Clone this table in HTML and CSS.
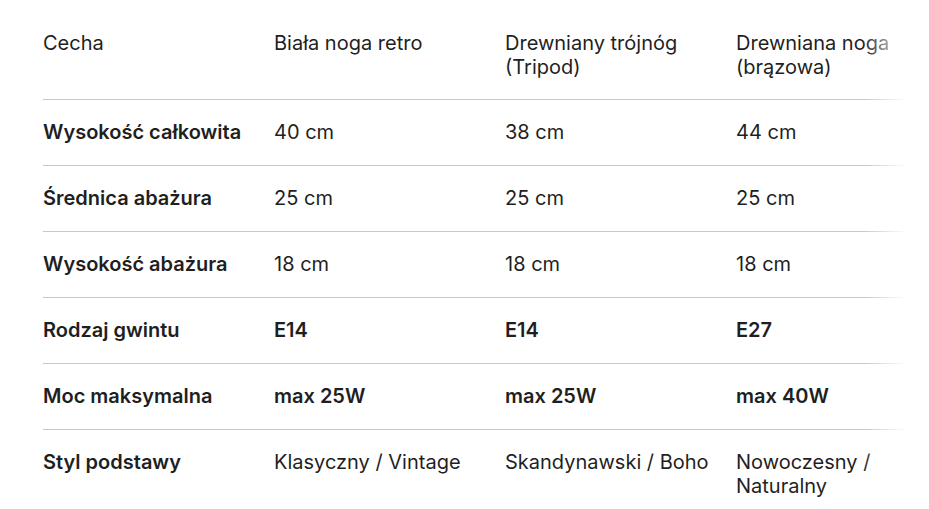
FILE: index.html
```html
<!DOCTYPE html>
<html lang="pl">
<head>
<meta charset="utf-8">
<link rel="stylesheet" href="styles.css">
</head>
<body>
<div class="wrap">
  <div class="scroller">
    <table class="spec">
      <thead>
        <tr>
          <th>Cecha</th>
          <th>Biała noga retro</th>
          <th>Drewniany trójnóg (Tripod)</th>
          <th>Drewniana noga (brązowa)</th>
        </tr>
      </thead>
      <tbody>
        <tr><td class="key">Wysokość całkowita</td><td>40 cm</td><td>38 cm</td><td>44 cm</td></tr>
        <tr><td class="key">Średnica abażura</td><td>25 cm</td><td>25 cm</td><td>25 cm</td></tr>
        <tr><td class="key">Wysokość abażura</td><td>18 cm</td><td>18 cm</td><td>18 cm</td></tr>
        <tr><td class="key">Rodzaj gwintu</td><td class="b">E14</td><td class="b">E14</td><td class="b">E27</td></tr>
        <tr><td class="key">Moc maksymalna</td><td class="b">max 25W</td><td class="b">max 25W</td><td class="b">max 40W</td></tr>
        <tr class="last"><td class="key">Styl podstawy</td><td>Klasyczny / Vintage</td><td>Skandynawski / Boho</td><td>Nowoczesny / Naturalny</td></tr>
      </tbody>
    </table>
  </div>
  <div class="fade"></div>
</div>
</body>
</html>
```

FILE: styles.css
```css
html, body {
  margin: 0;
  background: #ffffff;
}
body {
  font-family: "Inter", "Roboto", "Liberation Sans", sans-serif;
  color: #1f1f1f;
  font-size: 20px;
  line-height: 24px;
  height: 509px;
  overflow: hidden;
}
.wrap {
  position: relative;
  margin: 11px 22px 0 43px;
}
.scroller {
  overflow: hidden;
}
.spec {
  border-collapse: collapse;
  table-layout: fixed;
  width: 924px;
}
.spec th, .spec td {
  box-sizing: border-box;
  width: 231px;
  text-align: left;
  vertical-align: top;
  padding: 20px 24px 21px 0;
  border-bottom: 1px solid #c7c7c7;
}
.spec th {
  font-weight: 400;
  padding-bottom: 20px;
}
.spec tr.last td {
  border-bottom: none;
}
.key, .b {
  font-weight: 600;
}
.fade {
  position: absolute;
  top: 0;
  right: 0;
  width: 44px;
  bottom: 0;
  background: linear-gradient(to right, rgba(255,255,255,0), #ffffff);
  pointer-events: none;
}
```
